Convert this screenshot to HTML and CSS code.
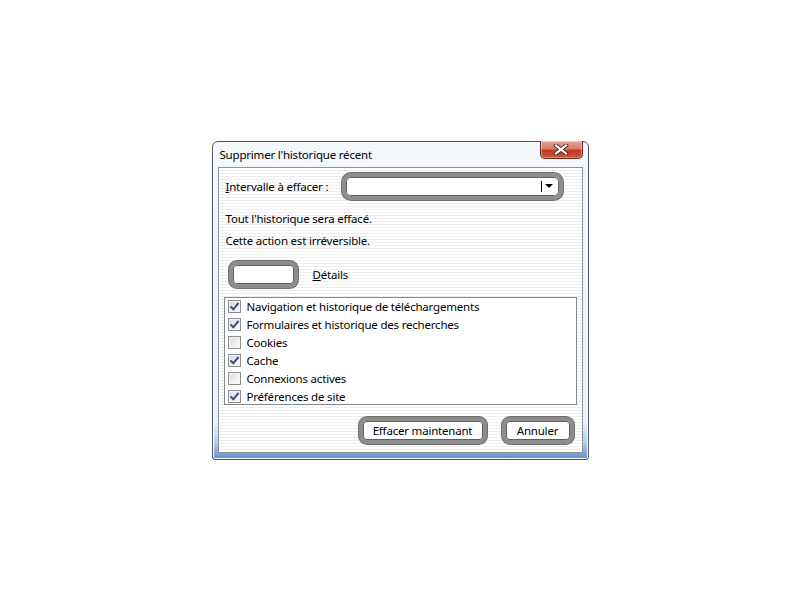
FILE: index.html
```html
<!DOCTYPE html>
<html lang="fr">
<head>
    <meta charset="UTF-8">
    <title>Supprimer l'historique récent</title>
    <link rel="stylesheet" href="styles.css">
</head>
<body>
    <div class="window">
        <div class="titlebar">
            <span class="title">Supprimer l'historique récent</span>
            <div class="close-btn">
                <svg width="16" height="11" viewBox="0 0 16 11">
                    <path d="M3 1.5 L13 9.5 M13 1.5 L3 9.5" stroke="#5a2219" stroke-width="4" stroke-linecap="square"/>
                    <path d="M3 1.5 L13 9.5 M13 1.5 L3 9.5" stroke="#fff" stroke-width="2.2" stroke-linecap="square"/>
                </svg>
            </div>
        </div>

        <div class="client">
            <div class="range-row">
                <span class="label"><u>I</u>ntervalle à effacer :</span>
                <div class="combo">
                    <span class="combo-arrow"><span class="bar"></span><span class="tri"></span></span>
                </div>
            </div>

            <p class="info first">Tout l'historique sera effacé.</p>
            <p class="info">Cette action est irréversible.</p>

            <div class="details-row">
                <div class="btn btn-empty"></div>
                <span class="details"><u>D</u>étails</span>
            </div>

            <ul class="list">
                <li><span class="check on"></span>Navigation et historique de téléchargements</li>
                <li><span class="check on"></span>Formulaires et historique des recherches</li>
                <li><span class="check"></span>Cookies</li>
                <li><span class="check on"></span>Cache</li>
                <li><span class="check"></span>Connexions actives</li>
                <li><span class="check on"></span>Préférences de site</li>
            </ul>

            <div class="actions">
                <div class="btn btn-clear">Effacer maintenant</div>
                <div class="btn btn-cancel">Annuler</div>
            </div>
        </div>
    </div>
</body>
</html>
```

FILE: styles.css
```css
* {
    margin: 0;
    padding: 0;
    box-sizing: border-box;
}

body {
    background: #fff;
    height: 100vh;
    display: flex;
    justify-content: center;
    align-items: center;
    font-family: "Noto Sans", "Open Sans", sans-serif;
    font-size: 11.5px;
    letter-spacing: -0.2px;
    color: #000;
}

/* Fenetre */
.window {
    width: 377px;
    height: 319px;
    padding: 0 5px 6px 5px;
    border: 1px solid #4e5560;
    border-radius: 6px 6px 3px 3px;
    background: linear-gradient(to bottom, #f4f7fb 0%, #eef2f8 88%, #b4cbeb 95%, #5d8fd4 100%);
    display: flex;
    flex-direction: column;
    box-shadow: inset 0 0 0 1px #fbfdff;
}

.titlebar {
    height: 25px;
    display: flex;
    justify-content: space-between;
    align-items: flex-start;
}

.title {
    padding: 5px 0 0 2px;
    line-height: 16px;
}

.close-btn {
    width: 43px;
    height: 18px;
    margin-top: -1px;
    border: 1px solid #6d2a22;
    border-top: none;
    border-radius: 0 0 5px 5px;
    background: linear-gradient(to bottom, #e9a898 0%, #d97a66 45%, #c23b25 55%, #c8523a 100%);
    display: flex;
    justify-content: center;
    align-items: center;
    box-shadow: inset 0 0 0 1px rgba(255, 255, 255, 0.35);
}

/* Zone client */
.client {
    flex: 1;
    border: 1px solid #8e9198;
    background: repeating-linear-gradient(to bottom, #ffffff 0px, #ffffff 2px, #eeeeee 2px, #eeeeee 3px);
    padding: 5px 5px 0 5px;
    display: flex;
    flex-direction: column;
}

.range-row {
    display: flex;
    align-items: center;
    height: 27px;
}

.label {
    padding-left: 2px;
    width: 118px;
}

.combo {
    width: 221px;
    height: 27px;
    border: 4px solid #8d8d8d;
    border-radius: 9px;
    background: #fff;
    box-shadow: 0 0 0 1px #707070, inset 0 0 0 1px #5f5f5f;
    display: flex;
    justify-content: flex-end;
    align-items: center;
    padding-right: 6px;
}

.combo-arrow {
    display: flex;
    align-items: center;
    gap: 3px;
}

.bar {
    width: 1px;
    height: 11px;
    background: #000;
}

.tri {
    width: 0;
    height: 0;
    border-left: 4px solid transparent;
    border-right: 4px solid transparent;
    border-top: 4px solid #000;
}

.info {
    padding-left: 2px;
    line-height: 22px;
}

.info.first {
    margin-top: 8px;
}

.details-row {
    display: flex;
    align-items: center;
    margin-top: 9px;
    padding-left: 5px;
    gap: 15px;
}

.btn {
    height: 27px;
    border: 4px solid #8d8d8d;
    border-radius: 8px;
    background: #fff;
    box-shadow: 0 0 0 1px #707070, inset 0 0 0 1px #5f5f5f;
    display: flex;
    justify-content: center;
    align-items: center;
}

.btn-empty {
    width: 69px;
}

/* Liste */
.list {
    list-style: none;
    margin-top: 9px;
    height: 108px;
    border: 1px solid #828790;
    background: #fff;
    padding: 0 0 0 3px;
}

.list li {
    display: flex;
    align-items: center;
    height: 18px;
}

.check {
    width: 13px;
    height: 13px;
    margin-right: 6px;
    border: 1px solid #8f8f8f;
    background: linear-gradient(135deg, #dcdcdc, #fbfbfb);
    box-shadow: inset 0 0 0 1px #f4f4f4;
    position: relative;
}

.check.on::after {
    content: "";
    position: absolute;
    left: 3px;
    top: 0px;
    width: 3px;
    height: 7px;
    border-right: 2px solid #3d4f8c;
    border-bottom: 2px solid #3d4f8c;
    transform: rotate(40deg);
}

.actions {
    display: flex;
    justify-content: flex-end;
    gap: 15px;
    margin-top: 12px;
    padding-right: 3px;
}

.btn-clear {
    width: 128px;
}

.btn-cancel {
    width: 72px;
}
```
